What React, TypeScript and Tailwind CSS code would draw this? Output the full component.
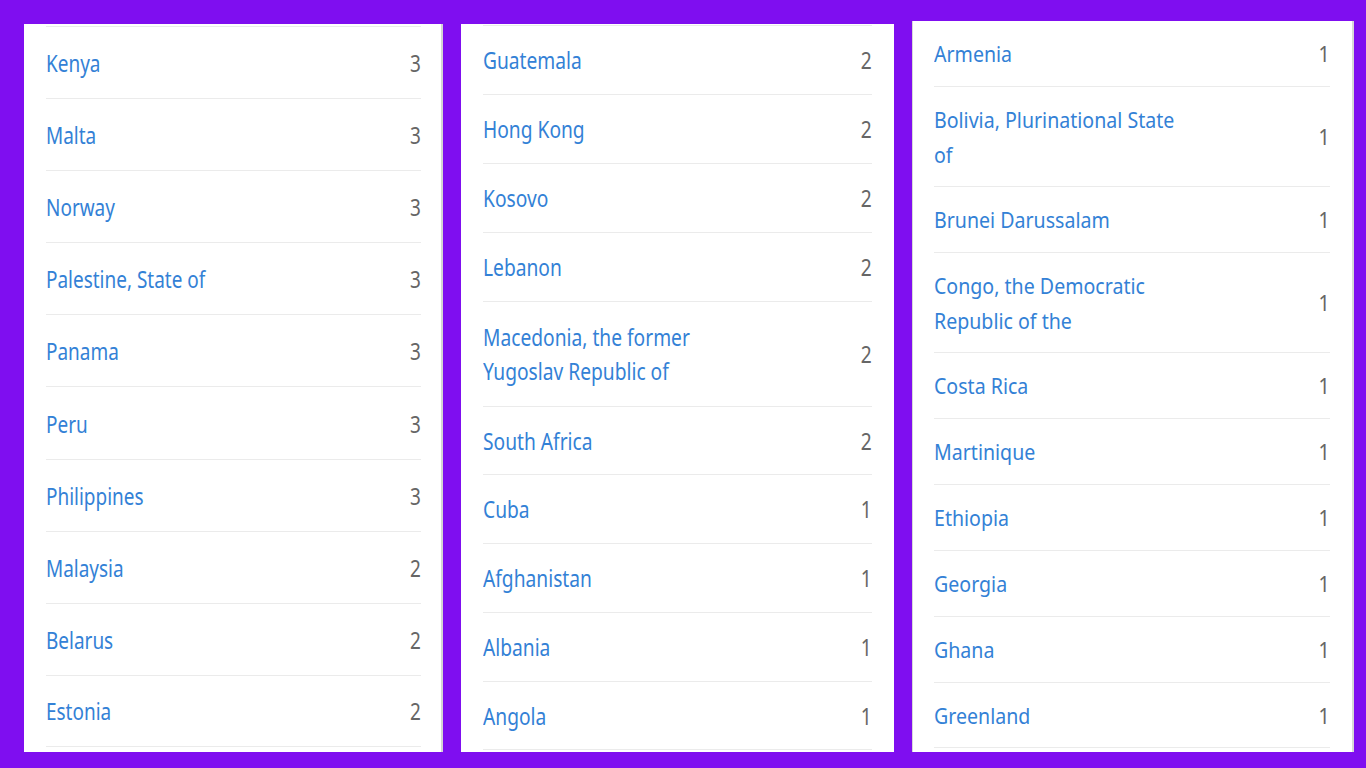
import React from 'react'

type Row = { name: string[]; count: number }

// each panel is a cropped phone screenshot, so sizes differ slightly
type Panel = {
  rows: Row[]
  rowH: string
  doubleH: string
  text: string
  scale: string
  box: string
  pad: string
}

const one = (name: string, count: number): Row => ({ name: [name], count })

const PANELS: Panel[] = [
  {
    rows: [
      one('Kenya', 3),
      one('Malta', 3),
      one('Norway', 3),
      one('Palestine, State of', 3),
      one('Panama', 3),
      one('Peru', 3),
      one('Philippines', 3),
      one('Malaysia', 2),
      one('Belarus', 2),
      one('Estonia', 2),
    ],
    rowH: 'h-[72.1px]',
    doubleH: 'h-[108px]',
    text: 'text-[24px] leading-[35px]',
    scale: 'scale-x-[0.79]',
    box: 'w-[419px] h-[728px] border-r-2 border-[#d4d4d4]',
    pad: 'pl-[22px] pr-[20px] pt-[2px]',
  },
  {
    rows: [
      one('Guatemala', 2),
      one('Hong Kong', 2),
      one('Kosovo', 2),
      one('Lebanon', 2),
      { name: ['Macedonia, the former', 'Yugoslav Republic of'], count: 2 },
      one('South Africa', 2),
      one('Cuba', 1),
      one('Afghanistan', 1),
      one('Albania', 1),
      one('Angola', 1),
    ],
    rowH: 'h-[68.9px]',
    doubleH: 'h-[105px]',
    text: 'text-[24px] leading-[34px]',
    scale: 'scale-x-[0.8]',
    box: 'w-[433px] h-[728px]',
    pad: 'pl-[22px] pr-[22px] pt-[1px]',
  },
  {
    rows: [
      one('Armenia', 1),
      { name: ['Bolivia, Plurinational State', 'of'], count: 1 },
      one('Brunei Darussalam', 1),
      { name: ['Congo, the Democratic', 'Republic of the'], count: 1 },
      one('Costa Rica', 1),
      one('Martinique', 1),
      one('Ethiopia', 1),
      one('Georgia', 1),
      one('Ghana', 1),
      one('Greenland', 1),
    ],
    rowH: 'h-[66px]',
    doubleH: 'h-[100px]',
    text: 'text-[22px] leading-[35px]',
    scale: 'scale-x-[0.89]',
    box: 'w-[442px] h-[731px] border-l border-r-2 border-[#d8d8d8]',
    pad: 'pl-[21px] pr-[22px] -mt-px',
  },
]

function CountryList({ panel }: { panel: Panel }) {
  return (
    <div className={`bg-white overflow-hidden flex-shrink-0 ${panel.box}`}>
      <ul className={`flex flex-col ${panel.pad}`}>
        {panel.rows.map(row => (
          <li
            key={row.name.join(' ')}
            className={`flex items-center justify-between border-t border-[#ebebeb] last:border-b
              ${row.name.length > 1 ? panel.doubleH : panel.rowH} ${panel.text}`}
          >
            <a className={`inline-block origin-left whitespace-nowrap text-[#3381d6] ${panel.scale}`}>
              {row.name.map((line, i) => (
                <span key={i} className="block">{line}</span>
              ))}
            </a>
            <span className={`inline-block origin-right text-[#666666] ${panel.scale}`}>
              {row.count}
            </span>
          </li>
        ))}
      </ul>
    </div>
  )
}

export default function App() {
  return (
    <div
      className="w-[1366px] h-[768px] bg-[#7f0ef0] flex items-end gap-[18px] pl-[24px] pb-[16px] overflow-hidden"
      style={{ fontFamily: '"Noto Sans", "Open Sans", sans-serif' }}
    >
      {PANELS.map((p, i) => (
        <CountryList key={i} panel={p} />
      ))}
    </div>
  )
}
